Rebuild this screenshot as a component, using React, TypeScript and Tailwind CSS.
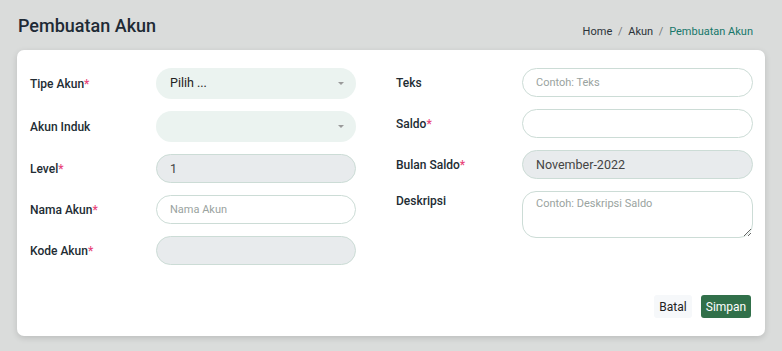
import React from 'react';

const font = { fontFamily: 'Roboto, "Noto Sans", sans-serif' };

function Label({ text, required, top }: { text: string; required?: boolean; top?: boolean }) {
    return (
        <label className={`w-[126px] shrink-0 text-[12px] font-medium text-[#222c33] ${top ? 'pt-[1px]' : ''}`}>
            {text}
            {required && <span className="text-[#e8457a]">*</span>}
        </label>
    );
}

function SelectBox({ value }: { value?: string }) {
    return (
        <div className="flex h-[31px] w-[200px] items-center justify-between rounded-full bg-[#ebf3f0] pl-[14px] pr-[12px] text-[12.5px] text-[#222]">
            <span>{value}</span>
            <span className="h-0 w-0 border-x-[3.5px] border-t-[3.5px] border-x-transparent border-t-[#9a9a9a]" />
        </div>
    );
}

function TextInput({ placeholder, value, disabled, width }: { placeholder?: string; value?: string; disabled?: boolean; width: string }) {
    return (
        <input
            type="text"
            placeholder={placeholder}
            defaultValue={value}
            disabled={disabled}
            className={`${width} h-[29px] rounded-full border border-[#ccdcd6] px-[13px] text-[11px] text-[#444] outline-none placeholder:text-[#9aa3a0] ${disabled ? 'bg-[#e8ebed] text-[12.5px]' : 'bg-white'}`}
        />
    );
}

export default function App() {
    return (
        <main className="h-[351px] bg-[#dadcdb] px-[17px]" style={font}>
            <div className="flex h-[50px] justify-between pl-[1px]">
                <h4 className="pt-[12px] text-[18px] font-medium text-[#1e2a35]">Pembuatan Akun</h4>
                <div className="mr-[12px] self-end pb-[10px] text-[11px] text-[#2a3238]">
                    Home <span className="mx-[3px] text-[#777]">/</span> Akun <span className="mx-[3px] text-[#777]">/</span>{' '}
                    <span className="text-[#16776a]">Pembuatan Akun</span>
                </div>
            </div>
            <div className="rounded-[7px] bg-white pb-[18px] pl-[13px] pr-[12px] pt-[18px] shadow-[0_2px_6px_rgba(0,0,0,0.14)]">
                <div className="flex">
                    <div className="flex w-[326px] flex-col gap-[12px]">
                        <div className="flex items-center">
                            <Label text="Tipe Akun" required />
                            <SelectBox value="Pilih ..." />
                        </div>
                        <div className="flex items-center">
                            <Label text="Akun Induk" />
                            <SelectBox />
                        </div>
                        <div className="flex items-center">
                            <Label text="Level" required />
                            <TextInput value="1" disabled width="w-[200px]" />
                        </div>
                        <div className="flex items-center">
                            <Label text="Nama Akun" required />
                            <TextInput placeholder="Nama Akun" width="w-[200px]" />
                        </div>
                        <div className="flex items-center">
                            <Label text="Kode Akun" required />
                            <TextInput disabled width="w-[200px]" />
                        </div>
                    </div>
                    <div className="ml-[40px] flex flex-1 flex-col gap-[12px]">
                        <div className="flex items-center">
                            <Label text="Teks" />
                            <TextInput placeholder="Contoh: Teks" width="w-[231px]" />
                        </div>
                        <div className="flex items-center">
                            <Label text="Saldo" required />
                            <TextInput width="w-[231px]" />
                        </div>
                        <div className="flex items-center">
                            <Label text="Bulan Saldo" required />
                            <TextInput value="November-2022" disabled width="w-[231px]" />
                        </div>
                        <div className="flex items-start">
                            <Label text="Deskripsi" top />
                            <textarea
                                placeholder="Contoh: Deskripsi Saldo"
                                className="h-[47px] w-[231px] rounded-[14px] border border-[#ccdcd6] px-[13px] pt-[4px] text-[11px] text-[#444] outline-none placeholder:text-[#9aa3a0]"
                            />
                        </div>
                    </div>
                </div>
                <div className="mt-[30px] flex justify-end gap-[9px] pr-[2px]">
                    <button type="button" className="h-[23px] w-[38px] rounded-[3px] bg-[#f6f8fa] text-[12px] text-[#222]">
                        Batal
                    </button>
                    <button type="button" className="h-[23px] w-[50px] rounded-[3px] bg-[#31704a] text-[12px] text-white">
                        Simpan
                    </button>
                </div>
            </div>
        </main>
    );
}
